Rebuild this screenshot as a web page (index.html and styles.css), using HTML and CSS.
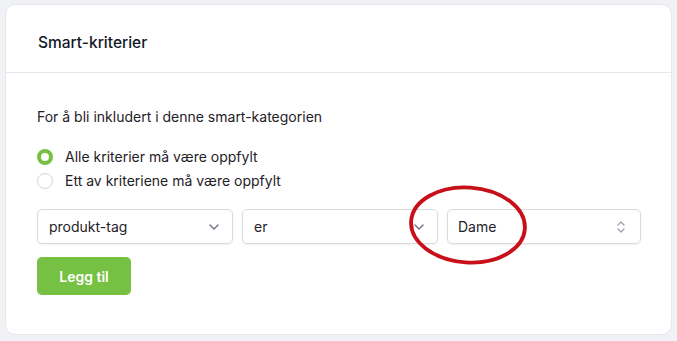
FILE: index.html
```html
<!DOCTYPE html>
<html lang="no">
<head>
<meta charset="utf-8">
<link rel="stylesheet" href="styles.css">
</head>
<body>
<div class="card">
  <div class="card-header">Smart-kriterier</div>
  <div class="card-body">
    <p class="intro">For å bli inkludert i denne smart-kategorien</p>
    <div class="radios">
      <label class="radio"><span class="dot checked"></span>Alle kriterier må være oppfylt</label>
      <label class="radio"><span class="dot"></span>Ett av kriteriene må være oppfylt</label>
    </div>
    <div class="row">
      <div class="select">produkt-tag
        <svg class="chev" width="12" height="8" viewBox="0 0 12 8"><path d="M2 2l4 4 4-4" fill="none" stroke="#6b7280" stroke-width="1.4" stroke-linecap="round" stroke-linejoin="round"/></svg>
      </div>
      <div class="select">er
        <svg class="chev" width="12" height="8" viewBox="0 0 12 8"><path d="M2 2l4 4 4-4" fill="none" stroke="#6b7280" stroke-width="1.4" stroke-linecap="round" stroke-linejoin="round"/></svg>
      </div>
      <div class="select">Dame
        <svg class="updown" width="10" height="16" viewBox="0 0 10 16"><path d="M2 6l3-3 3 3M2 10l3 3 3-3" fill="none" stroke="#9ca3af" stroke-width="1.3" stroke-linecap="round" stroke-linejoin="round"/></svg>
      </div>
    </div>
    <button class="btn">Legg til</button>
  </div>
  <svg class="circle" width="130" height="90" viewBox="0 0 130 90"><ellipse cx="65" cy="45" rx="57" ry="37.5" transform="rotate(4 65 45)" fill="none" stroke="#c8101a" stroke-width="3.8"/></svg>
</div>
</body>
</html>
```
FILE: styles.css
```css
* { box-sizing: border-box; }
html, body { margin: 0; }
body {
  background: #f1f2f5;
  padding: 4px 5px 6px 5px;
  font-family: Inter, "Noto Sans", sans-serif;
  color: #1f2128;
}
.card {
  position: relative;
  background: #fff;
  border: 1px solid #e5e7eb;
  border-radius: 10px;
  height: 331px;
}
.card-header {
  height: 68px;
  border-bottom: 1px solid #e5e7eb;
  padding: 8px 32px 0;
  display: flex;
  align-items: center;
  font-size: 15.5px;
  font-weight: 500;
  color: #111827;
}
.card-body {
  padding: 35px 32px 0 31px;
}
.intro {
  margin: 0;
  font-size: 14px;
  line-height: 18px;
}
.radios {
  margin-top: 22px;
  display: flex;
  flex-direction: column;
  gap: 6px;
}
.radio {
  display: flex;
  align-items: center;
  font-size: 14px;
  line-height: 18px;
}
.dot {
  width: 16px;
  height: 16px;
  border-radius: 50%;
  border: 1px solid #d1d5db;
  margin-right: 12px;
  flex: none;
}
.dot.checked {
  border: 4.5px solid #76c043;
  background: #fff;
}
.row {
  margin-top: 19px;
  display: grid;
  grid-template-columns: 196px 196px 194px;
  gap: 9px;
}
.select {
  height: 35px;
  border: 1px solid #d9dbe0;
  border-radius: 5px;
  box-shadow: 0 1px 2px rgba(0,0,0,0.06);
  display: flex;
  align-items: center;
  justify-content: space-between;
  padding: 0 12px 0 11px;
  font-size: 14px;
}
.select:last-child { padding-left: 10px; }
.updown { margin-right: 2px; }
.btn {
  margin-top: 13px;
  width: 94px;
  height: 38px;
  border: 0;
  border-radius: 5px;
  background: #76c043;
  color: #fff;
  font-family: inherit;
  font-size: 14px;
  font-weight: 600;
}
.circle {
  position: absolute;
  left: 397px;
  top: 175px;
}
```
